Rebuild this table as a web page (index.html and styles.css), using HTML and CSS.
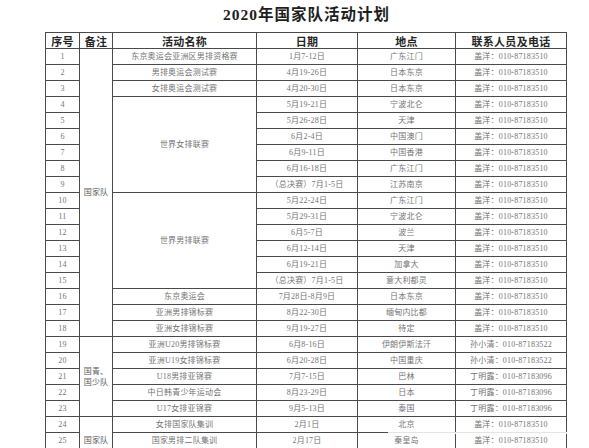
FILE: index.html
```html
<!DOCTYPE html>
<html lang="zh-CN">
<head>
<meta charset="utf-8">
<title>2020年国家队活动计划</title>
<link rel="stylesheet" href="styles.css">
</head>
<body>
<div class="page">
  <h1 class="title">2020年国家队活动计划</h1>
  <table class="plan">
    <colgroup>
      <col class="c-no"><col class="c-note"><col class="c-name"><col class="c-date"><col class="c-place"><col class="c-contact">
    </colgroup>
    <thead>
      <tr><th>序号</th><th>备注</th><th>活动名称</th><th>日期</th><th>地点</th><th>联系人员及电话</th></tr>
    </thead>
    <tbody>
      <tr><td>1</td><td class="note" rowspan="18">国家队</td><td>东京奥运会亚洲区男排资格赛</td><td>1月7-12日</td><td>广东江门</td><td>盖洋：010-87183510</td></tr>
      <tr><td>2</td><td>男排奥运会测试赛</td><td>4月19-26日</td><td>日本东京</td><td>盖洋：010-87183510</td></tr>
      <tr><td>3</td><td>女排奥运会测试赛</td><td>4月20-30日</td><td>日本东京</td><td>盖洋：010-87183510</td></tr>
      <tr><td>4</td><td rowspan="6">世界女排联赛</td><td>5月19-21日</td><td>宁波北仑</td><td>盖洋：010-87183510</td></tr>
      <tr><td>5</td><td>5月26-28日</td><td>天津</td><td>盖洋：010-87183510</td></tr>
      <tr><td>6</td><td>6月2-4日</td><td>中国澳门</td><td>盖洋：010-87183510</td></tr>
      <tr><td>7</td><td>6月9-11日</td><td>中国香港</td><td>盖洋：010-87183510</td></tr>
      <tr><td>8</td><td>6月16-18日</td><td>广东江门</td><td>盖洋：010-87183510</td></tr>
      <tr><td>9</td><td>（总决赛）7月1-5日</td><td>江苏南京</td><td>盖洋：010-87183510</td></tr>
      <tr><td>10</td><td rowspan="6">世界男排联赛</td><td>5月22-24日</td><td>广东江门</td><td>盖洋：010-87183510</td></tr>
      <tr><td>11</td><td>5月29-31日</td><td>宁波北仑</td><td>盖洋：010-87183510</td></tr>
      <tr><td>12</td><td>6月5-7日</td><td>波兰</td><td>盖洋：010-87183510</td></tr>
      <tr><td>13</td><td>6月12-14日</td><td>天津</td><td>盖洋：010-87183510</td></tr>
      <tr><td>14</td><td>6月19-21日</td><td>加拿大</td><td>盖洋：010-87183510</td></tr>
      <tr><td>15</td><td>（总决赛）7月1-5日</td><td>意大利都灵</td><td>盖洋：010-87183510</td></tr>
      <tr><td>16</td><td>东京奥运会</td><td>7月28日-8月9日</td><td>日本东京</td><td>盖洋：010-87183510</td></tr>
      <tr><td>17</td><td>亚洲男排锦标赛</td><td>8月22-30日</td><td>缅甸内比都</td><td>盖洋：010-87183510</td></tr>
      <tr><td>18</td><td>亚洲女排锦标赛</td><td>9月19-27日</td><td>待定</td><td>盖洋：010-87183510</td></tr>
      <tr><td>19</td><td class="note" rowspan="5"><span class="note-text">国青、<br>国少队</span></td><td>亚洲U20男排锦标赛</td><td>6月8-16日</td><td>伊朗伊斯法汗</td><td>孙小清：010-87183522</td></tr>
      <tr><td>20</td><td>亚洲U19女排锦标赛</td><td>6月20-28日</td><td>中国重庆</td><td>孙小清：010-87183522</td></tr>
      <tr><td>21</td><td>U18男排亚锦赛</td><td>7月7-15日</td><td>巴林</td><td>丁明露：010-87183096</td></tr>
      <tr><td>22</td><td>中日韩青少年运动会</td><td>8月23-29日</td><td>日本</td><td>丁明露：010-87183096</td></tr>
      <tr><td>23</td><td>U17女排亚锦赛</td><td>9月5-13日</td><td>泰国</td><td>丁明露：010-87183096</td></tr>
      <tr><td>24</td><td class="note" rowspan="3">国家队</td><td>女排国家队集训</td><td>2月1日</td><td>北京</td><td>盖洋：010-87183510</td></tr>
      <tr><td>25</td><td>国家男排二队集训</td><td>2月17日</td><td>秦皇岛</td><td>盖洋：010-87183510</td></tr>
      <tr><td>26</td><td>国家青年队集训</td><td>3月</td><td>待定</td><td>孙小清：010-87183522</td></tr>
    </tbody>
  </table>
  <div class="streak"></div>
</div>
</body>
</html>
```

FILE: styles.css
```css
html, body {
  margin: 0;
  padding: 0;
  background: #ffffff;
  overflow: hidden;
}

.page {
  position: relative;
  width: 589px;
  height: 448px;
  overflow: hidden;
}

.title {
  margin: 0;
  height: 32px;
  line-height: 30px;
  text-align: center;
  padding-left: 24px;
  font-family: "Liberation Serif", "Noto Sans CJK SC", serif;
  font-weight: 700;
  font-size: 15.5px;
  letter-spacing: 1px;
  color: #1e1e1e;
}

.plan {
  margin-left: 45px;
  width: 522px;
  table-layout: fixed;
  border-collapse: collapse;
  border: 1px solid #3c3c3c;
}

.c-no { width: 34px; }
.c-note { width: 33px; }
.c-name { width: 144px; }
.c-date { width: 101px; }
.c-place { width: 98px; }
.c-contact { width: 111px; }

.plan tr {
  height: 16px;
}

.plan th,
.plan td {
  border: 1px solid #4a4a4a;
  padding: 0;
  text-align: center;
  vertical-align: middle;
  white-space: nowrap;
  overflow: hidden;
}

.plan th {
  height: 15px;
  font-family: "Noto Sans CJK SC", sans-serif;
  font-weight: 700;
  font-size: 11px;
  line-height: 14px;
  color: #262626;
  letter-spacing: 0.3px;
}

.plan td {
  height: 15px;
  font-family: "Liberation Serif", "Noto Sans CJK SC", serif;
  font-size: 8px;
  line-height: 10px;
  color: #747474;
  letter-spacing: 0.2px;
}

.plan td.note {
  font-size: 8px;
  color: #5a5a5a;
}

.note-text {
  display: inline-block;
  text-align: left;
  line-height: 11px;
}

.streak {
  position: absolute;
  left: 388px;
  top: 432px;
  width: 184px;
  height: 2px;
  background: rgba(255, 255, 255, 0.85);
}
```
